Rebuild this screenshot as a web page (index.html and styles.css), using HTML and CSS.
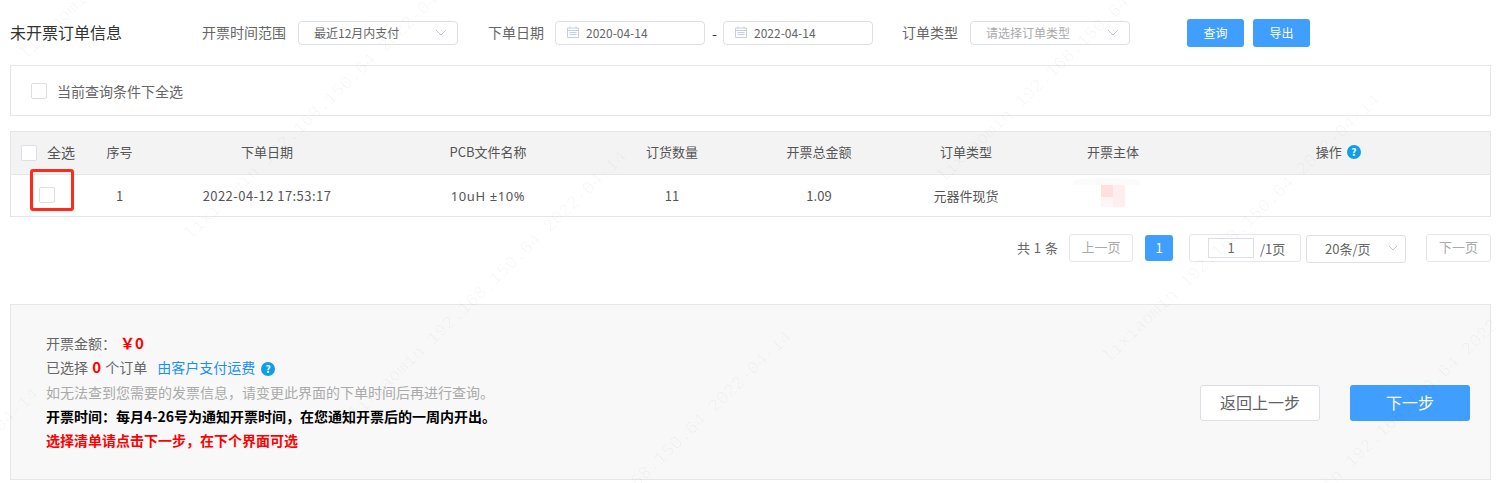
FILE: index.html
```html
<!DOCTYPE html>
<html lang="zh-CN">
<head>
<meta charset="UTF-8" />
<meta name="viewport" content="width=device-width, initial-scale=1" />
<title>未开票订单信息</title>
<link rel="stylesheet" href="styles.css">
</head>
<body>
  <div class="page">

    <div class="filters">
      <h1 class="title">未开票订单信息</h1>
      <span class="label label-range">开票时间范围</span>
      <div class="select select-range">
        <span>最近12月内支付</span>
        <svg class="arrow" width="12" height="7" viewBox="0 0 12 7"><path d="M1 1l5 5 5-5" fill="none" stroke="#c0c4cc" stroke-width="1"/></svg>
      </div>
      <span class="label label-date">下单日期</span>
      <div class="date">
        <svg class="cal" width="12" height="12" viewBox="0 0 12 12"><path d="M.5 2h11v9.500H.5zM.5 4.500h11M3 .5v2M9 .5v2M2.500 6.500h7M2.500 8.500h7" fill="none" stroke="#c6d0dc" stroke-width="1"/></svg>
        <span>2020-04-14</span>
      </div>
      <span class="dash">-</span>
      <div class="date">
        <svg class="cal" width="12" height="12" viewBox="0 0 12 12"><path d="M.5 2h11v9.500H.5zM.5 4.500h11M3 .5v2M9 .5v2M2.500 6.500h7M2.500 8.500h7" fill="none" stroke="#c6d0dc" stroke-width="1"/></svg>
        <span>2022-04-14</span>
      </div>
      <span class="label label-type">订单类型</span>
      <div class="select select-type">
        <span class="placeholder">请选择订单类型</span>
        <svg class="arrow" width="12" height="7" viewBox="0 0 12 7"><path d="M1 1l5 5 5-5" fill="none" stroke="#c0c4cc" stroke-width="1"/></svg>
      </div>
      <button class="btn-small btn-search">查询</button>
      <button class="btn-small btn-export">导出</button>
    </div>

    <div class="select-all">
      <span class="check"></span>
      <span>当前查询条件下全选</span>
    </div>

    <div class="table">
      <div class="row head">
        <div class="cell-check"><span class="check"></span><span class="all">全选</span></div>
        <div>序号</div>
        <div>下单日期</div>
        <div>PCB文件名称</div>
        <div>订货数量</div>
        <div>开票总金额</div>
        <div>订单类型</div>
        <div>开票主体</div>
        <div class="cell-op">操作 <span class="help">?</span></div>
      </div>
      <div class="row body-row">
        <div class="cell-check"><span class="check"></span></div>
        <div>1</div>
        <div class="datetime">2022-04-12 17:53:17</div>
        <div class="part">10uH ±10%</div>
        <div>11</div>
        <div>1.09</div>
        <div>元器件现货</div>
        <div class="cell-blur">
          <div class="mosaic"><i class="m1"></i><i class="m2"></i><i class="m3"></i></div>
        </div>
        <div></div>
        <span class="mark"></span>
      </div>
    </div>

    <div class="pager">
      <span class="total">共 1 条</span>
      <span class="page-btn page-prev">上一页</span>
      <span class="page-num">1</span>
      <div class="jump"><span class="jump-input">1</span><span>/1页</span></div>
      <div class="page-size">
        <span>20条/页</span>
        <svg class="arrow" width="10" height="6" viewBox="0 0 10 6"><path d="M1 1l4 4 4-4" fill="none" stroke="#c0c4cc" stroke-width="1"/></svg>
      </div>
      <span class="page-btn page-next">下一页</span>
    </div>

    <div class="summary">
      <div class="info">
        <p>开票金额：<b class="amount">￥0</b></p>
        <p>已选择 <b class="count">0</b> 个订单<a class="freight" href="#">由客户支付运费</a><span class="help help-freight">?</span></p>
        <p class="muted">如无法查到您需要的发票信息，请变更此界面的下单时间后再进行查询。</p>
        <p class="notice">开票时间：每月4-26号为通知开票时间，在您通知开票后的一周内开出。</p>
        <p class="warn">选择清单请点击下一步，在下个界面可选</p>
      </div>
      <div class="actions">
        <button class="btn-back">返回上一步</button>
        <button class="btn-next">下一步</button>
      </div>
    </div>

    <div class="watermarks">
      <span class="wm wm1">lixiaomin 192.168.150.64 2022-04-14</span>
      <span class="wm wm2">lixiaomin 192.168.150.64 2022-04-14</span>
      <span class="wm wm3">lixiaomin 192.168.150.64 2022-04-14</span>
      <span class="wm wm4">lixiaomin 192.168.150.64 2022-04-14</span>
      <span class="wm wm5">lixiaomin 192.168.150.64 2022-04-14</span>
      <span class="wm wm6">lixiaomin 192.168.150.64 2022-04-14</span>
      <span class="wm wm7">lixiaomin 192.168.150.64 2022-04-14</span>
      <span class="wm wm8">lixiaomin 192.168.150.64 2022-04-14</span>
      <span class="wm wm9">lixiaomin 192.168.150.64 2022-04-14</span>
    </div>

  </div>
</body>
</html>
```

FILE: styles.css
```css
* {
  box-sizing: border-box;
}
html, body {
  margin: 0;
  padding: 0;
  height: 100%;
  overflow: hidden;
  background: #fff;
  font-family: "Noto Sans CJK SC", "Noto Sans", sans-serif;
  color: #666;
}
.page {
  position: relative;
  height: 100%;
  overflow: hidden;
  padding: 19px 7px 0 10px;
}

/* top filters */
.filters {
  display: flex;
  align-items: center;
  height: 28px;
}
.title {
  margin: 0;
  width: 112px;
  padding-bottom: 3px;
  font-size: 16px;
  font-weight: normal;
  line-height: 24px;
  color: #333;
  white-space: nowrap;
}
.label {
  padding-bottom: 2px;
  font-size: 14px;
  white-space: nowrap;
}
.label-range { margin: 0 12px 0 80px; }
.label-date { margin: 0 11px 0 30px; }
.label-type { margin: 0 12px 0 29px; }
.select, .date {
  display: flex;
  align-items: center;
  height: 24px;
  padding-bottom: 2px;
  border: 1px solid #dcdfe6;
  border-radius: 4px;
  font-size: 12px;
  background: #fff;
}
.select {
  justify-content: space-between;
  width: 160px;
  padding-left: 15px;
  padding-right: 10px;
}
.placeholder {
  color: #aaa;
}
.date {
  width: 150px;
  padding-left: 11px;
}
.cal {
  margin-right: 7px;
}
.dash {
  width: 18px;
  padding-left: 1px;
  text-align: center;
  font-size: 14px;
  color: #333;
}
.btn-small {
  width: 57px;
  height: 28px;
  padding: 0 0 2px;
  border: 0;
  border-radius: 3px;
  background: #409eff;
  color: #fff;
  font: 12px "Noto Sans CJK SC", sans-serif;
}
.btn-search { margin-left: 57px; }
.btn-export { margin-left: 9px; }

/* select all box */
.select-all {
  display: flex;
  align-items: center;
  gap: 10px;
  height: 51px;
  margin-top: 18px;
  padding-left: 20px;
  border: 1px solid #e6e6e6;
  font-size: 14px;
}
.check {
  flex: none;
  display: block;
  width: 16px;
  height: 16px;
  border: 1px solid #dcdfe6;
  border-radius: 2px;
  background: #fff;
}

/* table */
.table {
  margin-top: 15px;
  border: 1px solid #e6e6e6;
  font-size: 13px;
}
.row {
  position: relative;
  display: grid;
  grid-template-columns: 71.5px 74px 221px 221px 147px 147px 147px 147px 1fr;
  align-items: center;
  text-align: center;
  color: #555;
}
.head {
  height: 43px;
  background: #f3f3f3;
  border-bottom: 1px solid #e6e6e6;
}
.head > div {
  margin-bottom: 3px;
}
.body-row {
  height: 41px;
}
.body-row > div {
  margin-bottom: 1px;
}
.cell-check {
  display: flex;
  align-items: center;
}
.head .cell-check {
  gap: 10px;
  padding-left: 10px;
}
.head .check {
  margin-top: 3px;
}
.all {
  font-size: 14px;
}
.body-row .cell-check {
  padding-left: 28px;
}
.datetime {
  letter-spacing: .45px;
}
.body-row .part {
  margin-bottom: 0;
  font-family: "Noto Sans", "Noto Sans CJK SC", sans-serif;
  letter-spacing: .6px;
}
.cell-op {
  display: flex;
  justify-content: center;
  align-items: center;
  gap: 5px;
}
.help {
  display: inline-block;
  width: 14px;
  height: 14px;
  border-radius: 50%;
  background: #0f9fe8;
  color: #fff;
  font-size: 10px;
  font-weight: bold;
  line-height: 14px;
  text-align: center;
}
.cell-blur {
  display: flex;
  justify-content: center;
}
.mosaic {
  position: relative;
  display: grid;
  grid-template-columns: 12px 12px;
  grid-template-rows: 12px 10px;
  margin-top: 2px;
}
.mosaic::before {
  content: "";
  position: absolute;
  left: -28px;
  top: -7px;
  width: 67px;
  height: 7px;
  border-radius: 50% 50% 0 0;
  background: #fbfbfb;
}
.mosaic i { display: block; }
.m1 { background: #ffdfe0; }
.m2 { background: #ffeeee; grid-row: span 2; grid-column: 2; }
.m3 { background: #fff5f7; }
.mark {
  position: absolute;
  left: 19px;
  top: -6px;
  width: 44px;
  height: 42px;
  border: 3px solid #ff2a1c;
  border-radius: 3px;
}

/* pagination */
.pager {
  display: flex;
  justify-content: flex-end;
  align-items: flex-start;
  margin-top: 17px;
  font-size: 13px;
}
.total {
  margin-right: 11px;
  line-height: 28px;
  word-spacing: 1px;
}
.page-btn {
  width: 65px;
  height: 28px;
  border: 1px solid #e6e6e6;
  border-radius: 3px;
  color: #aaa;
  line-height: 24px;
  text-align: center;
}
.page-prev {
  width: 64px;
}
.page-num {
  width: 28px;
  height: 26px;
  margin: 1px 16px 0 12px;
  border-radius: 3px;
  background: #409eff;
  color: #fff;
  line-height: 26px;
  text-align: center;
}
.jump {
  display: flex;
  align-items: center;
  gap: 6px;
  width: 112px;
  height: 28px;
  margin-right: 5px;
  padding-left: 18px;
  border: 1px solid #e6e6e6;
  border-radius: 3px;
}
.jump-input {
  width: 46px;
  height: 20px;
  border: 1px solid #dcdfe6;
  line-height: 18px;
  text-align: center;
}
.page-size {
  display: flex;
  justify-content: space-between;
  align-items: center;
  width: 100px;
  height: 28px;
  margin: 1px 20px 0 0;
  padding: 0 7px 2px 18px;
  border: 1px solid #dcdfe6;
  border-radius: 3px;
}

/* summary */
.summary {
  display: flex;
  justify-content: space-between;
  align-items: flex-start;
  height: 176px;
  margin-top: 41px;
  padding: 26px 20px 0 35px;
  border: 1px solid #e6e6e6;
  background: #f8f8f8;
}
.info p {
  margin: 0;
  font-size: 14px;
  line-height: 24.3px;
  white-space: nowrap;
}
.amount {
  margin-left: 4px;
  color: #f00;
  font-size: 15px;
}
.count {
  margin: 0 1px;
  color: #f00;
  font-size: 15px;
}
.freight {
  margin-left: 10px;
  color: #1890ff;
  text-decoration: none;
}
.help-freight {
  margin-left: 6px;
}
.info .muted { color: #aaa; }
.info .notice { color: #000; font-weight: bold; }
.info .warn { color: #f00; font-weight: bold; }
.actions {
  display: flex;
  gap: 30px;
  margin-top: 54px;
}
.btn-back, .btn-next {
  width: 120px;
  height: 36px;
  padding: 0 0 2px;
  border-radius: 3px;
  font: 16px "Noto Sans CJK SC", sans-serif;
}
.btn-back {
  border: 1px solid #dcdfe6;
  background: #fff;
  color: #606266;
}
.btn-next {
  border: 0;
  background: #409eff;
  color: #fff;
}

/* faint watermark on top of everything */
.watermarks {
  position: absolute;
  inset: 0;
  pointer-events: none;
}
.wm {
  position: absolute;
  transform-origin: 0 0;
  transform: rotate(-44deg) translateY(-50%);
  font: 18px "Liberation Mono", monospace;
  color: rgba(0,0,0,.034);
  white-space: nowrap;
}
.wm1 { left: 22px; top: 57px; }
.wm2 { left: 187px; top: 237px; }
.wm3 { left: 352px; top: 417px; }
.wm4 { left: 517px; top: 597px; }
.wm5 { left: 775px; top: 0; }
.wm6 { left: 940px; top: 180px; }
.wm7 { left: 1105px; top: 360px; }
.wm8 { left: 1270px; top: 540px; }
.wm9 { left: -236px; top: 654px; }
```
